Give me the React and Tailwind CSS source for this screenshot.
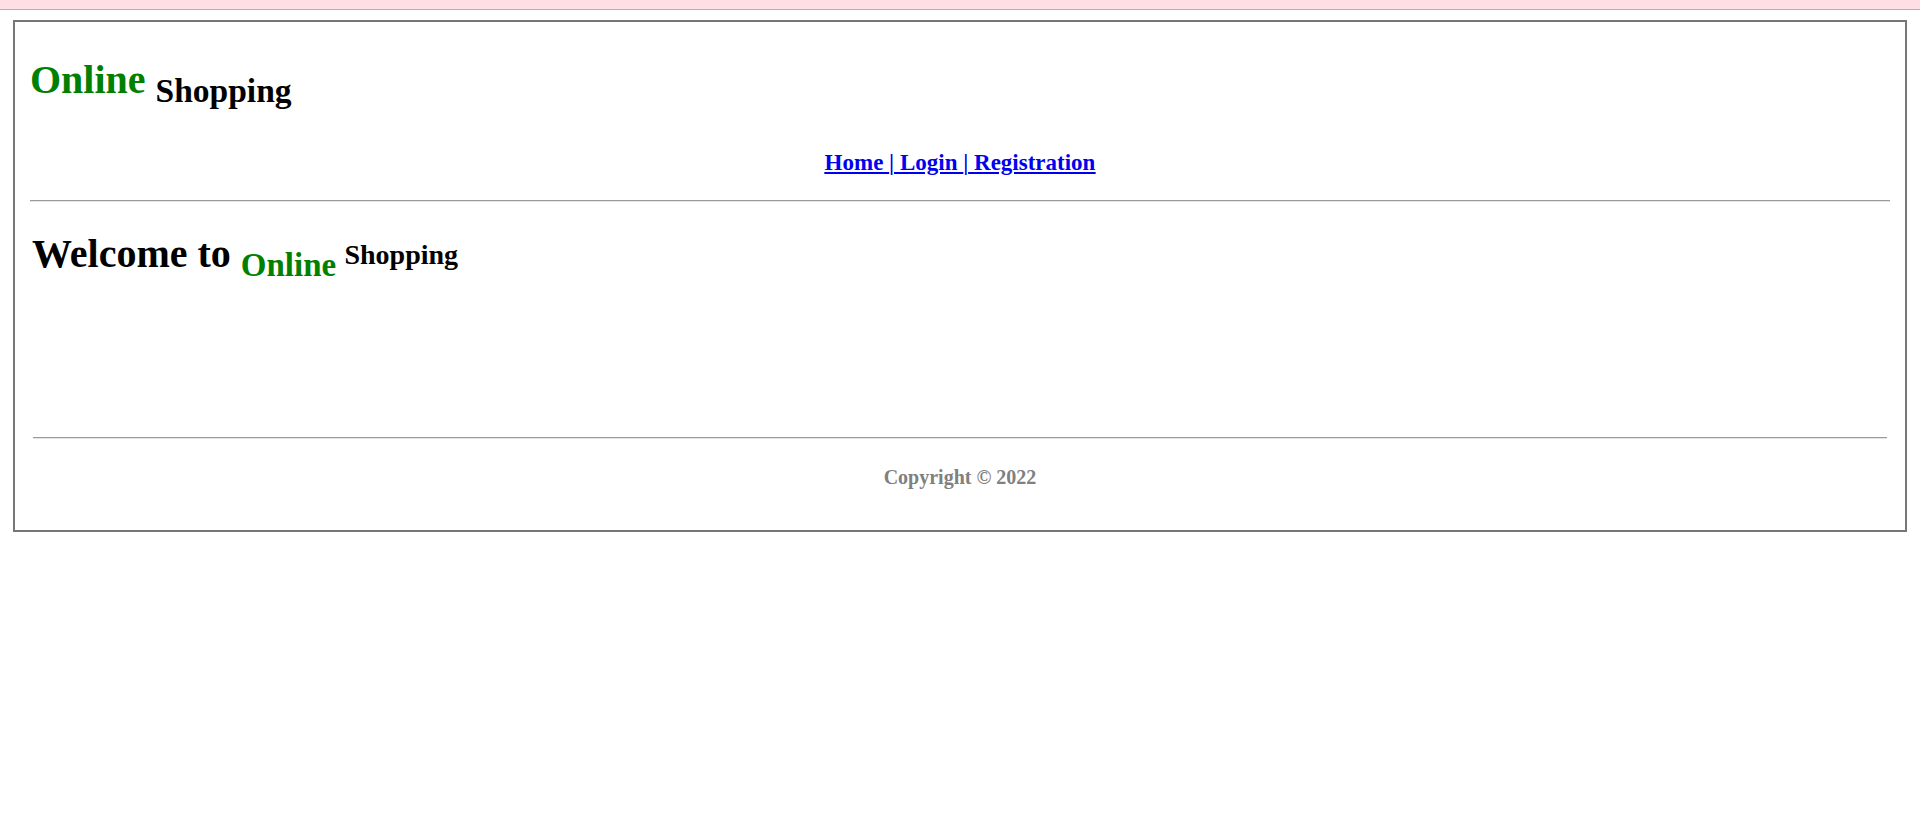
export default function App() {
  return (
    <div className="min-h-screen bg-white font-['Liberation_Serif',serif] text-black">
      <div className="h-[10px] border-b border-[#b9b0b2] bg-[#ffdfe5]"></div>
      <div className="px-[13px] pt-[10px]">
        <div className="border-2 border-[#767676] px-[15px] pb-[41px]">
          {/* header */}
          <h1 className="pt-[35px] text-[40px] leading-[45px] font-bold">
            <span className="text-[#008000]">Online</span>{" "}
            <span className="align-sub text-[33.5px] leading-none">Shopping</span>
          </h1>

          <div className="mt-[42px] text-center text-[23px] leading-[26px] font-bold text-[#0000ee] underline">
            <a href="#">Home </a>|<a href="#"> Login </a>|
            <a href="#"> Registration</a>
          </div>

          <div className="mt-[24px] h-[2px] border-t border-b border-t-[#9a9a9a] border-b-[#e5e5e5]"></div>

          {/* content */}
          <h2 className="mt-[29px] pl-[2px] text-[40px] leading-[45px] font-bold">
            Welcome to{" "}
            <span className="align-sub text-[33px] leading-none">
              <span className="text-[#008000]">Online</span>{" "}
              <span className="align-super text-[28px] leading-none">Shopping</span>
            </span>
          </h2>

          {/* footer */}
          <div className="mx-[3px] mt-[155px] h-[2px] border-t border-b border-t-[#9a9a9a] border-b-[#e5e5e5]"></div>
          <div className="mt-[27px] text-center text-[20px] leading-[23px] font-bold text-[#808080]">
            Copyright © 2022
          </div>
        </div>
      </div>
    </div>
  );
}
